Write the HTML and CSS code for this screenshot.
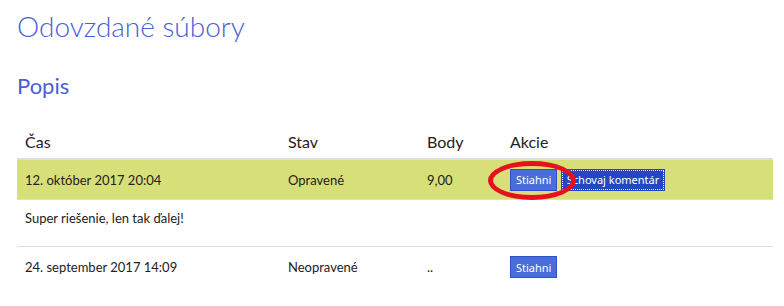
FILE: index.html
```html
<!DOCTYPE html>
<html lang="sk">
<head>
  <meta charset="UTF-8" />
  <title>Odovzdané súbory</title>
  <link rel="stylesheet" href="styles.css">
</head>
<body>
  <div class="page">
    <h1>Odovzdané súbory</h1>
    <h2>Popis</h2>

    <table class="files">
      <thead>
        <tr>
          <th class="col-time">Čas</th>
          <th class="col-state">Stav</th>
          <th class="col-points">Body</th>
          <th>Akcie</th>
        </tr>
      </thead>
      <tbody>
        <tr class="active">
          <td>12. október 2017 20:04</td>
          <td>Opravené</td>
          <td>9,00</td>
          <td class="actions">
            <span class="mark-wrap"><button class="btn">Stiahni</button><span class="mark"></span></span>
            <button class="btn btn-focus">Schovaj komentár</button>
          </td>
        </tr>
        <tr class="comment">
          <td colspan="4">Super riešenie, len tak ďalej!</td>
        </tr>
        <tr>
          <td>24. september 2017 14:09</td>
          <td>Neopravené</td>
          <td>..</td>
          <td class="actions"><button class="btn">Stiahni</button></td>
        </tr>
      </tbody>
    </table>
  </div>
</body>
</html>
```

FILE: styles.css
```css
body {
  margin: 0;
  font-family: Lato, "Open Sans", sans-serif;
  color: #222;
  background: #fff;
}

.page {
  padding: 0 11px 0 17px;
}

h1 {
  margin: 0;
  padding-top: 9px;
  font-size: 28px;
  font-weight: 300;
  color: #4a5ed6;
  line-height: 34px;
}

h2 {
  margin: 30px 0 0;
  font-size: 22px;
  font-weight: 400;
  color: #4a5ed6;
  line-height: 26px;
}

.files {
  width: 100%;
  margin-top: 32px;
  border-collapse: collapse;
  font-size: 13px;
}

.files th {
  text-align: left;
  font-weight: 400;
  font-size: 16px;
  padding: 0 8px 7px;
  height: 20px;
  border-bottom: 2px solid #ddd;
}

.col-time { width: 247px; }
.col-state { width: 123px; }
.col-points { width: 67px; }

.files td {
  padding: 0 8px;
  height: 39px;
  border-bottom: 1px solid #ddd;
}

.files tr.active td {
  background: #d6df78;
}

.files tr.comment td {
  height: 36px;
  vertical-align: top;
  padding-top: 10px;
}

.files tr:last-child td {
  border-bottom: none;
  height: 40px;
}

.actions {
  white-space: nowrap;
}

.btn {
  font-family: "Noto Sans", sans-serif;
  font-size: 11px;
  color: #fff;
  background: #4a6ddc;
  border: 1px solid #3050c8;
  padding: 0 5px;
  height: 22px;
  margin: 0;
  vertical-align: middle;
}

.btn-focus {
  background: #2446c0;
  border-color: #2446c0;
  outline: 1px dotted #fff;
  outline-offset: -2px;
}

.mark-wrap {
  position: relative;
  display: inline-block;
  vertical-align: middle;
}

.mark {
  position: absolute;
  left: -22px;
  top: -8px;
  width: 78px;
  height: 29px;
  border: 5px solid #e8101c;
  border-radius: 50%;
  pointer-events: none;
}
```
